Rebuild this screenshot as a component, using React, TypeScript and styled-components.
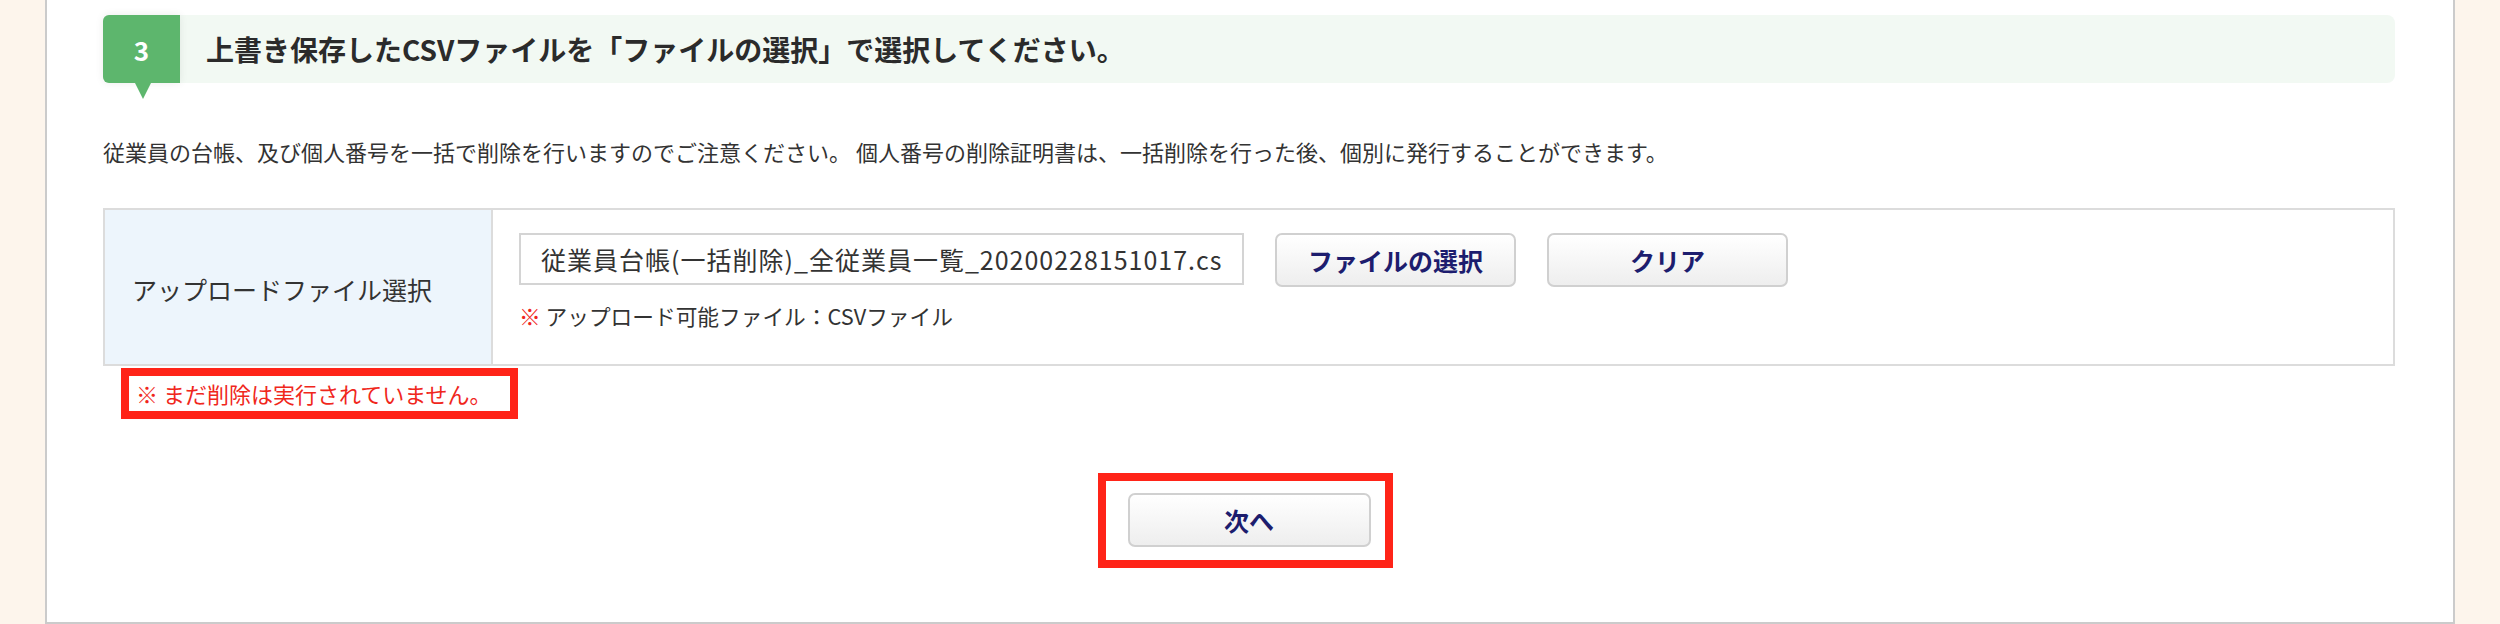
import styled, {createGlobalStyle} from 'styled-components'

const GlobalStyle = createGlobalStyle`
	html, body {
		margin: 0;
		padding: 0;
	}
	body {
		background: #fdf5ec;
		font-family: "Noto Sans CJK JP", "Noto Sans", sans-serif;
		color: #333;
	}
`

const Page = styled.div`
	width: 2500px;
	height: 624px;
	padding: 0 45px;
	box-sizing: border-box;
	background: #fdf5ec;
	overflow: hidden;
`

const Panel = styled.section`
	height: 624px;
	box-sizing: border-box;
	background: #fff;
	border: 2px solid #cbcbcb;
	border-top: none;
	padding: 15px 58px 0 56px;
`

const StepHeading = styled.div`
	display: flex;
	align-items: center;
	height: 68px;
	background: #f2f9f3;
	border-radius: 6px 8px 8px 6px;
`

const StepBadge = styled.span`
	position: relative;
	flex: 0 0 77px;
	height: 100%;
	display: flex;
	align-items: center;
	justify-content: center;
	background: #5db66d;
	border-radius: 6px 0 0 6px;
	box-shadow: 0 0 8px rgba(0, 0, 0, 0.08);
	color: #fff;
	font-size: 26px;
	font-weight: 700;

	&::after {
		content: '';
		position: absolute;
		top: 100%;
		left: 32px;
		border-left: 8px solid transparent;
		border-right: 8px solid transparent;
		border-top: 16px solid #5db66d;
	}
`

const StepTitle = styled.h2`
	margin: 0 0 0 26px;
	font-size: 28px;
	font-weight: 700;
	line-height: 1;
	color: #2b2b2b;
`

const Description = styled.p`
	margin: 52px 0 0;
	font-size: 22px;
	line-height: 33px;
	color: #333;
`

const FormTable = styled.div`
	margin-top: 40px;
	display: grid;
	grid-template-columns: 388px 1fr;
	border: 2px solid #dcdcdc;
`

const LabelCell = styled.div`
	display: flex;
	align-items: center;
	padding: 4px 0 0 27px;
	background: #edf5fc;
	border-right: 2px solid #dcdcdc;
	font-size: 25px;
	color: #333;
`

const ValueCell = styled.div`
	padding: 23px 0 31px 26px;
`

const ControlRow = styled.div`
	display: flex;
	align-items: flex-start;
	gap: 31px;
`

const FileInput = styled.input`
	width: 725px;
	height: 52px;
	box-sizing: border-box;
	padding: 0 20px;
	border: 2px solid #d4d4d4;
	border-radius: 0;
	background: #fff;
	font-family: inherit;
	font-size: 25px;
	letter-spacing: 1px;
	color: #333;
	outline: none;
`

const Button = styled.button<{$width: number}>`
	width: ${({$width}) => $width}px;
	height: 54px;
	padding: 0;
	border: 2px solid #d0d0d0;
	border-radius: 7px;
	background: linear-gradient(#ffffff, #eeeeee);
	font-family: inherit;
	font-size: 25px;
	font-weight: 700;
	color: #1d1d6e;
	cursor: pointer;
`

const Note = styled.p`
	margin: 12px 0 0;
	font-size: 21.7px;
	line-height: 34px;
	color: #333;
`

const Mark = styled.span`
	color: #f0261c;
`

const Annotation = styled.div`
	width: 397px;
	box-sizing: border-box;
	margin: 2px 0 0 18px;
	height: 51px;
	padding: 0 0 0 7px;
	border: 8px solid #ff2418;
	font-size: 22px;
	line-height: 35px;
	color: #f0271c;
	white-space: nowrap;
`

const NextRow = styled.div`
	display: flex;
	justify-content: center;
	margin-top: 54px;
`

const NextHighlight = styled.div`
	margin-right: 8px;
	padding: 12px 14px 13px 22px;
	border: 8px solid #ff2418;
`

export default function App() {
	return (
		<>
			<GlobalStyle />
			<Page>
				<Panel>
					<StepHeading>
						<StepBadge>3</StepBadge>
						<StepTitle>上書き保存したCSVファイルを「ファイルの選択」で選択してください。</StepTitle>
					</StepHeading>

					<Description>
						従業員の台帳、及び個人番号を一括で削除を行いますのでご注意ください。 個人番号の削除証明書は、一括削除を行った後、個別に発行することができます。
					</Description>

					<FormTable>
						<LabelCell>アップロードファイル選択</LabelCell>
						<ValueCell>
							<ControlRow>
								<FileInput readOnly value="従業員台帳(一括削除)_全従業員一覧_20200228151017.csv" />
								<Button $width={241}>ファイルの選択</Button>
								<Button $width={241}>クリア</Button>
							</ControlRow>
							<Note>
								<Mark>※</Mark> アップロード可能ファイル：CSVファイル
							</Note>
						</ValueCell>
					</FormTable>

					<Annotation>※ まだ削除は実行されていません。</Annotation>

					<NextRow>
						<NextHighlight>
							<Button $width={243}>次へ</Button>
						</NextHighlight>
					</NextRow>
				</Panel>
			</Page>
		</>
	)
}
